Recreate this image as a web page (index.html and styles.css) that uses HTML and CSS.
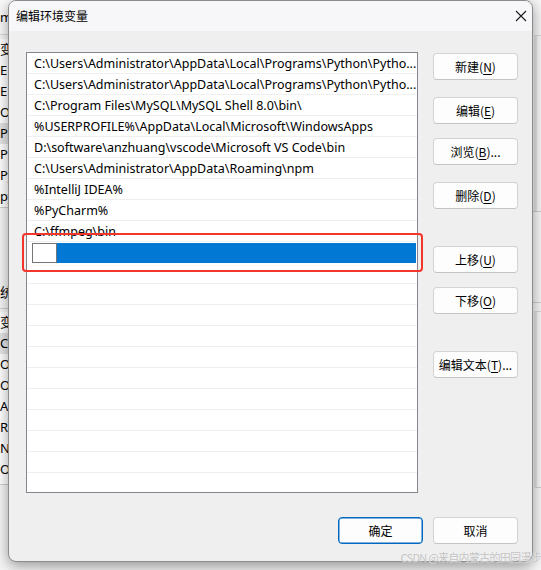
FILE: index.html
```html
<!DOCTYPE html>
<html lang="zh-CN">
<head>
<meta charset="utf-8">
<title>编辑环境变量</title>
<link rel="stylesheet" href="styles.css">
</head>
<body>
<div class="desk">
  <div class="bgwin">
    <div class="bg-top"><span class="bg-t">m</span></div>
    <div class="bg-group g1">
      <div class="bg-row">变</div>
      <div class="bg-row">E</div>
      <div class="bg-row">E</div>
      <div class="bg-row">Or</div>
      <div class="bg-row hl">Pa</div>
      <div class="bg-row">PH</div>
      <div class="bg-row">Py</div>
      <div class="bg-row">py</div>
    </div>
    <div class="bg-head">统</div>
    <div class="bg-group g2">
      <div class="bg-row">变</div>
      <div class="bg-row hl">Co</div>
      <div class="bg-row">OI</div>
      <div class="bg-row">Or</div>
      <div class="bg-row">A</div>
      <div class="bg-row">R</div>
      <div class="bg-row">NI</div>
      <div class="bg-row">OS</div>
    </div>
  </div>
  <div class="bgright">
    <div class="r-a"></div>
    <div class="r-b"></div>
    <div class="r-c"></div>
  </div>

  <div class="dialog">
    <div class="titlebar">
      <span class="title">编辑环境变量</span>
      <svg class="close" width="12" height="12" viewBox="0 0 12 12"><path d="M1 1 L11 11 M11 1 L1 11" stroke="#1a1a1a" stroke-width="1.1" fill="none"/></svg>
    </div>
    <div class="content">
      <div class="main">
        <div class="list">
          <div class="row">C:\Users\Administrator\AppData\Local\Programs\Python\Pytho...</div>
          <div class="row">C:\Users\Administrator\AppData\Local\Programs\Python\Pytho...</div>
          <div class="row">C:\Program Files\MySQL\MySQL Shell 8.0\bin\</div>
          <div class="row">%USERPROFILE%\AppData\Local\Microsoft\WindowsApps</div>
          <div class="row">D:\software\anzhuang\vscode\Microsoft VS Code\bin</div>
          <div class="row">C:\Users\Administrator\AppData\Roaming\npm</div>
          <div class="row">%IntelliJ IDEA%</div>
          <div class="row">%PyCharm%</div>
          <div class="row">C:\ffmpeg\bin</div>
          <div class="row sel"><span class="edit"></span><span class="bar"></span></div>
          <div class="row"></div>
          <div class="row"></div>
          <div class="row"></div>
          <div class="row"></div>
          <div class="row"></div>
          <div class="row"></div>
          <div class="row"></div>
          <div class="row"></div>
          <div class="row"></div>
          <div class="row"></div>
          <div class="row"></div>
        </div>
        <div class="side">
          <button class="btn m1">新建(<u>N</u>)</button>
          <button class="btn m2">编辑(<u>E</u>)</button>
          <button class="btn m3">浏览(<u>B</u>)...</button>
          <button class="btn m4">删除(<u>D</u>)</button>
          <button class="btn m5">上移(<u>U</u>)</button>
          <button class="btn m6">下移(<u>O</u>)</button>
          <button class="btn m7">编辑文本(<u>T</u>)...</button>
        </div>
      </div>
      <div class="footer">
        <button class="btn primary">确定</button>
        <button class="btn">取消</button>
      </div>
    </div>
  </div>

  <div class="annot"></div>
  <div class="watermark">CSDN @来自内蒙古的田园漫步</div>
</div>
</body>
</html>
```
FILE: styles.css
```css
html, body {
  margin: 0;
  padding: 0;
}
body {
  font-family: "Noto Sans", "Noto Sans CJK SC", sans-serif;
  font-size: 12px;
  color: #000;
}
.desk {
  position: relative;
  width: 541px;
  height: 570px;
  overflow: hidden;
  background: #f0f0f0;
}

/* background window (left strip) */
.bgwin {
  position: absolute;
  left: 0;
  top: 0;
  width: 40px;
  height: 570px;
  background: #f5f5f5;
  font-family: "Noto Sans", "Noto Sans CJK SC", sans-serif;
  font-size: 13px;
  line-height: 21px;
}
.bg-top {
  height: 35px;
  border-bottom: 1px solid #d9d9d9;
  box-sizing: border-box;
  padding-top: 7px;
  background: #f9f9f9;
}
.bg-t { display: block; margin-left: 0; line-height: 20px; }
.bg-group { background: #ffffff; }
.g1 { margin-top: 4px; height: 168px; border-bottom: 1px solid #d0d0d0; }
.bg-row { height: 21px; margin-left: 0; white-space: nowrap; }
.bg-row.hl { background: #e4e4e4; }
.bg-head { margin-top: 74px; height: 26px; border-bottom: 1px solid #cfcfcf; }
.g2 { margin-top: 3px; height: 172px; border-bottom: 1px solid #cfcfcf; }

/* background window (right strip) */
.bgright {
  position: absolute;
  left: 530px;
  top: 0;
  width: 11px;
  height: 570px;
  background: #f5f5f5;
}
.r-a { margin-top: 35px; height: 175px; border-top: 1px solid #d6d6d6; border-left: 3px solid #e2e2e2; margin-left: 4px; }
.r-b { height: 90px; border-top: 1px solid #cdcdcd; border-bottom: 1px solid #cdcdcd; }
.r-c { margin-top: 8px; height: 175px; border-top: 1px solid #d6d6d6; border-left: 3px solid #e2e2e2; margin-left: 4px; border-bottom: 1px solid #cdcdcd; }

/* dialog window */
.dialog {
  position: absolute;
  left: 8px;
  top: 0;
  width: 525px;
  height: 562px;
  box-sizing: border-box;
  border: 1px solid #8c8c8c;
  border-radius: 8px;
  background: #efefef;
  box-shadow: 0 4px 14px rgba(0, 0, 0, 0.38);
  display: flex;
  flex-direction: column;
  overflow: hidden;
}
.titlebar {
  height: 30px;
  flex: none;
  background: #f7f7f9;
  display: flex;
  align-items: center;
  justify-content: space-between;
  padding: 0 5px 0 7px;
}
.title {
  font-family: "Noto Sans CJK SC", sans-serif;
  font-size: 12px;
  margin-top: -2px;
}
.close { margin-top: -1px; }

.content {
  flex: 1;
  padding: 21px 14px 0 17px;
  display: flex;
  flex-direction: column;
}
.main {
  display: flex;
  gap: 15px;
}
.list {
  width: 392px;
  height: 441px;
  box-sizing: border-box;
  border: 1px solid #85858d;
  background: #fff;
  overflow: hidden;
}
.row {
  height: 21px;
  box-sizing: border-box;
  border-bottom: 1px solid #efefef;
  padding-left: 7px;
  line-height: 21px;
  white-space: nowrap;
  overflow: hidden;
  font-size: 12.5px;
}
.row.sel {
  display: flex;
  padding-left: 5px;
  padding-right: 1px;
  border-bottom: none;
  padding-top: 1px;
}
.edit {
  width: 25px;
  height: 20px;
  box-sizing: border-box;
  border: 1px solid #767676;
  background: #fff;
  flex: none;
}
.bar {
  flex: 1;
  height: 20px;
  background: #0078d4;
}

.side {
  width: 85px;
  display: flex;
  flex-direction: column;
}
.btn {
  width: 85px;
  height: 27px;
  box-sizing: border-box;
  border: 1px solid #d3d3d3;
  border-bottom-color: #c4c4c4;
  border-radius: 4px;
  background: #fdfdfd;
  font-family: "Noto Sans CJK SC", sans-serif;
  font-size: 12px;
  color: #000;
  padding: 0;
  margin: 0;
}
.btn u { text-underline-offset: 2px; }
.m1 { margin-top: 1px; }
.m2 { margin-top: 17px; }
.m3 { margin-top: 14px; }
.m4 { margin-top: 17px; }
.m5 { margin-top: 37px; }
.m6 { margin-top: 14px; }
.m7 { margin-top: 37px; }

.footer {
  margin-top: 24px;
  display: flex;
  justify-content: flex-end;
  gap: 10px;
}
.btn.primary {
  border: 1px solid #0067c0;
  box-shadow: inset 0 0 0 0.5px #0067c0;
}

/* annotation overlay */
.annot {
  position: absolute;
  left: 22px;
  top: 233px;
  width: 401px;
  height: 39px;
  box-sizing: border-box;
  border: 2.5px solid #f2362b;
  border-radius: 4px;
}
.watermark {
  position: absolute;
  right: 0;
  bottom: 5px;
  font-family: "Noto Sans CJK SC", sans-serif;
  font-size: 11px;
  color: #c2c2c2;
  text-shadow: 0 0 1px #fff;
  letter-spacing: -0.7px;
}
```
